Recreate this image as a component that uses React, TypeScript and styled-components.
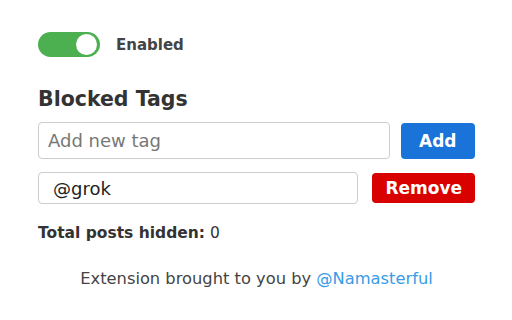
import styled, { createGlobalStyle } from "styled-components";

const GlobalStyle = createGlobalStyle`
  html, body {
    margin: 0;
    padding: 0;
    background: #ffffff;
    font-family: "DejaVu Sans", Verdana, sans-serif;
    color: #333;
  }
`;

const tags = ["@grok"];

function App(): JSX.Element {
  return (
    <>
      <GlobalStyle />
      <Popup>
        <ToggleRow>
          <Switch>
            <Knob />
          </Switch>
          <ToggleLabel>Enabled</ToggleLabel>
        </ToggleRow>

        <Heading>Blocked Tags</Heading>

        <AddRow>
          <TagInput placeholder="Add new tag" />
          <ActionButton $color="#1a73d8">Add</ActionButton>
        </AddRow>

        {tags.map((tag) => (
          <TagRow key={tag}>
            <TagField>{tag}</TagField>
            <ActionButton $color="#d90000" $small>
              Remove
            </ActionButton>
          </TagRow>
        ))}

        <Stats>
          <b>Total posts hidden:</b> 0
        </Stats>

        <Footer>
          Extension brought to you by <Link>@Namasterful</Link>
        </Footer>
      </Popup>
    </>
  );
}

const Popup = styled.div`
  width: 512px;
  height: 320px;
  box-sizing: border-box;
  padding: 32px 37px 0 38px;
  display: flex;
  flex-direction: column;
`;

const ToggleRow = styled.div`
  display: flex;
  align-items: center;
  gap: 16px;
`;

const Switch = styled.div`
  width: 62px;
  height: 25px;
  border-radius: 13px;
  background: #4caf50;
  position: relative;
`;

const Knob = styled.span`
  position: absolute;
  top: 2px;
  right: 3px;
  width: 21px;
  height: 21px;
  border-radius: 50%;
  background: #ffffff;
`;

const ToggleLabel = styled.span`
  font-size: 15px;
  font-weight: 700;
  color: #444;
`;

const Heading = styled.h2`
  margin: 29px 0 0;
  font-size: 20.5px;
  line-height: 26px;
  font-weight: 700;
  color: #333;
`;

const AddRow = styled.div`
  display: flex;
  align-items: center;
  gap: 11px;
  margin-top: 10px;
`;

const TagRow = styled.div`
  display: flex;
  align-items: center;
  gap: 14px;
  margin-top: 13px;
`;

const TagInput = styled.input`
  flex: 1;
  height: 37px;
  box-sizing: border-box;
  border: 1px solid #cccccc;
  border-radius: 4px;
  padding: 0 9px;
  font-family: "DejaVu Sans", Verdana, sans-serif;
  font-size: 18px;
  color: #333;

  &::placeholder {
    color: #777;
  }

  &:focus {
    outline: none;
  }
`;

const TagField = styled.div`
  flex: 1;
  height: 32px;
  box-sizing: border-box;
  border: 1px solid #cccccc;
  border-radius: 4px;
  padding: 0 14px;
  display: flex;
  align-items: center;
  font-size: 18px;
  color: #222;
`;

const ActionButton = styled.button<{ $color: string; $small?: boolean }>`
  height: ${(p) => (p.$small ? "30px" : "36px")};
  padding: 0 ${(p) => (p.$small ? "13px" : "18.5px")};
  border: none;
  border-radius: 4px;
  background: ${(p) => p.$color};
  color: #ffffff;
  font-family: "DejaVu Sans", Verdana, sans-serif;
  font-weight: 700;
  font-size: 17px;
  cursor: pointer;
`;

const Stats = styled.div`
  margin-top: 20px;
  font-size: 15.5px;
  color: #333;

  b {
    font-weight: 700;
  }
`;

const Footer = styled.div`
  margin-top: 27px;
  text-align: center;
  font-size: 16.3px;
  color: #444;
`;

const Link = styled.span`
  color: #3a9be6;
`;

export default App;
